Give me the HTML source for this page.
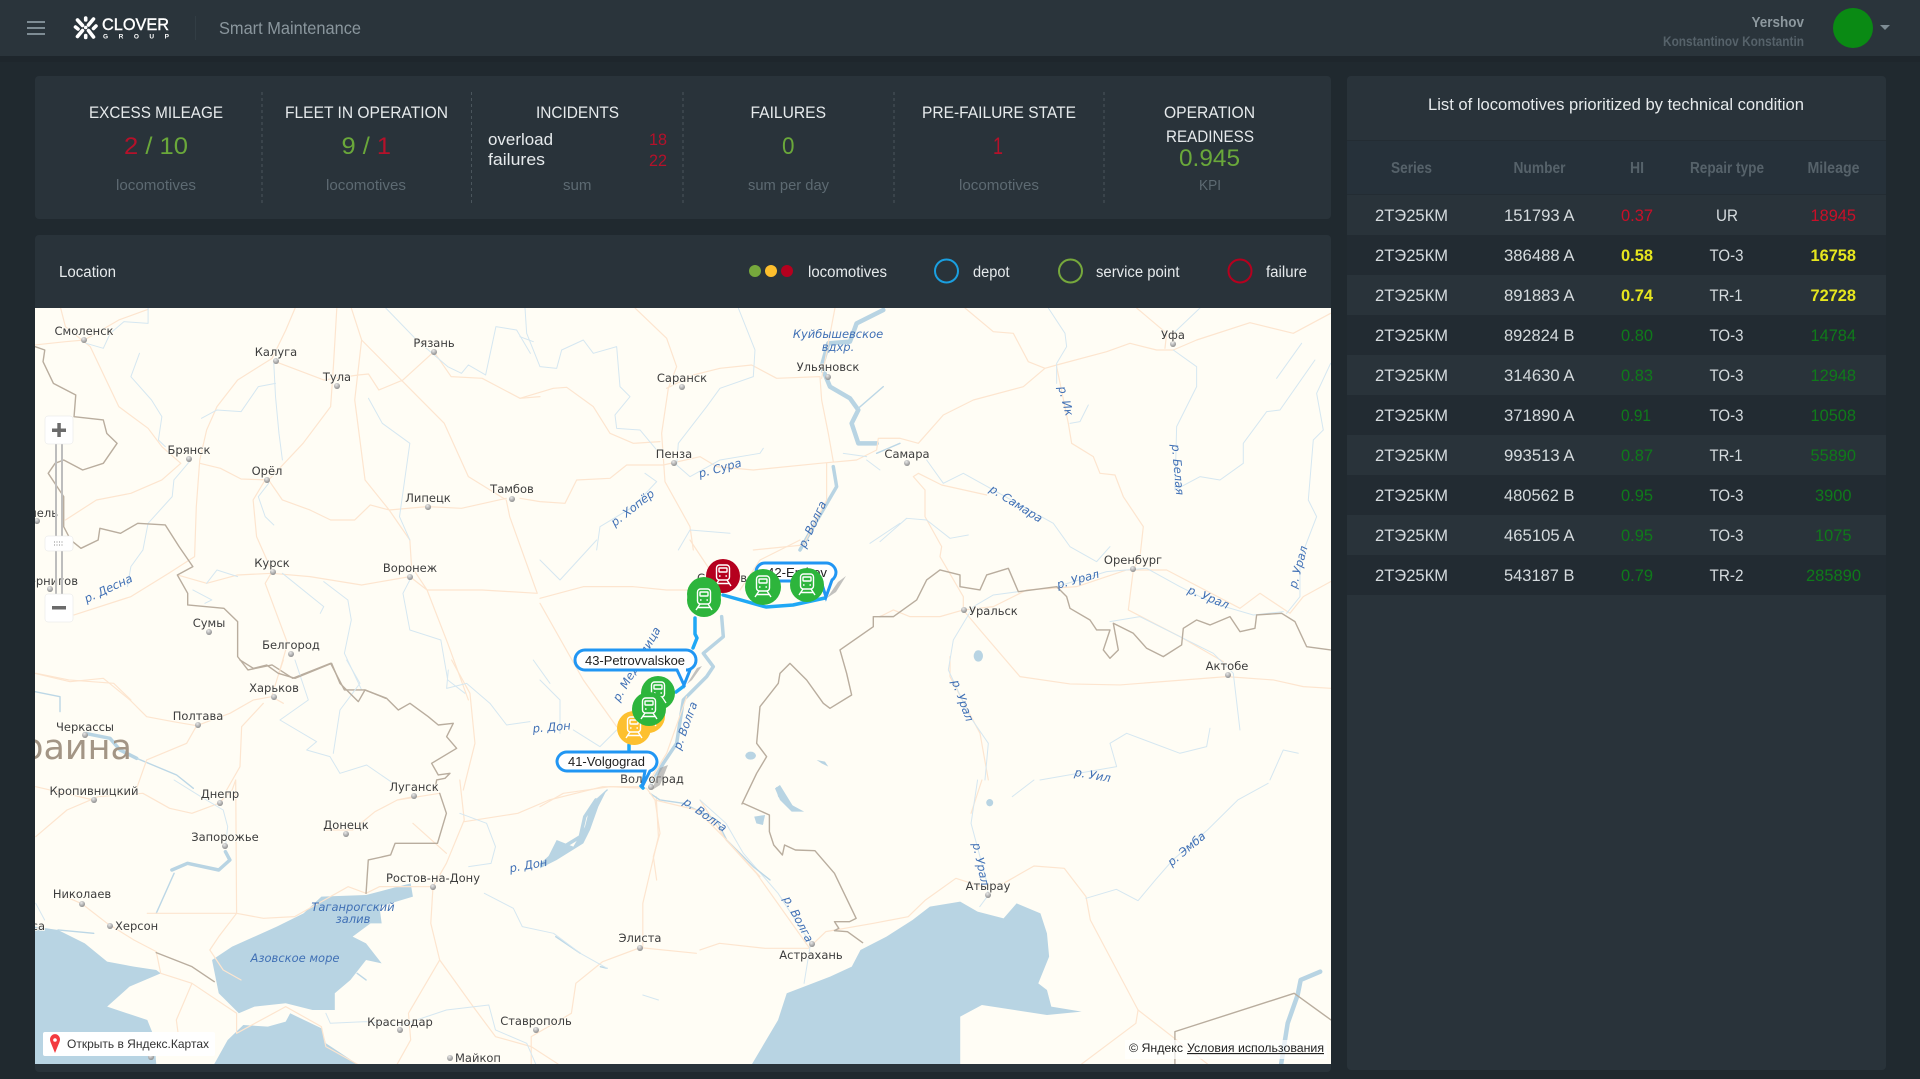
<!DOCTYPE html>
<html lang="en"><head><meta charset="utf-8"><title>Smart Maintenance</title>
<style>
html,body{margin:0;padding:0;background:#20292f;width:1920px;height:1079px;overflow:hidden}
svg{display:block;font-family:"Liberation Sans","Noto Sans CJK SC",sans-serif}
.m path{vector-effect:non-scaling-stroke;stroke-linejoin:round;stroke-linecap:round}
.w{fill:#b8d4e3;stroke:none}
.wl{fill:none;stroke:#b8d4e3;stroke-width:4.5}
.wm{fill:none;stroke:#b8d4e3;stroke-width:3.5}
.wt{fill:none;stroke:#b8d4e3;stroke-width:2}
.wf{fill:none;stroke:#bcd7e6;stroke-width:1.4}
.rv{fill:none;stroke:#d5e7f1;stroke-width:1}
.rd{fill:none;stroke:#fde5cf;stroke-width:1.2}
.bd{fill:none;stroke:#b9ad9e;stroke-width:1.4}
.c{font:11.5px "DejaVu Sans","Liberation Sans",sans-serif;fill:#3d3d3d;text-anchor:middle;paint-order:stroke;stroke:#fffdf5;stroke-width:1.5}
.cs{text-anchor:start}.ce{text-anchor:end}
.r{font:italic 11.5px "DejaVu Sans","Liberation Sans",sans-serif;fill:#4070b5;text-anchor:middle}
.h{font-size:17px;fill:#e6eaec}
.s{font-size:15px;fill:#5d6a72}
.n{font-size:24.5px}
.g{fill:#6aa83a}.e{fill:#b5112a}
.l{font-size:15.5px;fill:#e6eaec}
.th{font-size:15.5px;font-weight:bold;fill:#56626a}
.td{font-size:16.5px;fill:#d5dbde}
.re{fill:#c90f28;font-size:16.5px}.ye{fill:#e6e61e;font-size:16.5px;font-weight:bold}.gr{fill:#0f7a1a;font-size:16.5px}
.bl{fill:#fff;stroke:#2196f3;stroke-width:3}
.bt{font-size:13px;fill:#222}
.dash{stroke:#4a555c;stroke-width:1;stroke-dasharray:3 3}
</style></head><body>
<svg width="1920" height="1079" viewBox="0 0 1920 1079" xmlns="http://www.w3.org/2000/svg">
<defs>
<clipPath id="mc"><rect x="35" y="308" width="1296" height="756"/></clipPath>
<radialGradient id="dg" cx=".4" cy=".3" r=".8"><stop offset="0" stop-color="#e8e8e8"/><stop offset="1" stop-color="#808080"/></radialGradient>
<g id="tr" fill="none" stroke="#fff" stroke-width="1.4">
<rect x="-6.5" y="-11" width="13" height="15" rx="3"/>
<rect x="-4" y="-8" width="8" height="4" rx=".5"/>
<circle cx="-3.2" cy="0" r=".9" fill="#fff" stroke="none"/><circle cx="3.2" cy="0" r=".9" fill="#fff" stroke="none"/>
<path d="M-4 4 L-8 10 M4 4 L8 10 M-6.5 7.5 H6.5"/>
</g>
</defs>

<!-- header -->
<rect width="1920" height="1079" fill="#20292f"/>
<rect width="1920" height="56" fill="#2a343b"/>
<rect y="56" width="1920" height="6" fill="#1e262c"/>
<rect x="27" y="21" width="18" height="2" fill="#7e8c94"/><rect x="27" y="27" width="18" height="2" fill="#7e8c94"/><rect x="27" y="33" width="18" height="2" fill="#7e8c94"/>
<g fill="none" stroke="#fff" stroke-width="3.6" stroke-linecap="round">
<path d="M77.500 20 L82.500 25.500 M93.500 19 L88.500 25 M75.500 27 L78 29 M96 26 L93.500 28.500 M82.500 30.500 L77.500 36.500 M88.500 30.500 L93.500 37 M85.700 18 L85.700 20 M85.700 35.500 L85.700 37.500"/>
</g>
<circle cx="85.700" cy="27.500" r="1.800" fill="#fff"/>
<text x="102" y="30" font-size="16.500" fill="#fff" stroke="#fff" stroke-width=".4" textLength="67" lengthAdjust="spacingAndGlyphs">CLOVER</text>
<text x="103" y="38.500" font-size="6.500" font-weight="bold" fill="#fff" textLength="66" lengthAdjust="spacing">GROUP</text>
<rect x="195" y="16" width="1" height="24" fill="#323d44"/>
<text x="219" y="34" font-size="17.500" fill="#8a969d" textLength="142" lengthAdjust="spacingAndGlyphs">Smart Maintenance</text>
<text x="1751.500" y="27" font-size="15" font-weight="bold" fill="#8d989e" textLength="52.500" lengthAdjust="spacingAndGlyphs">Yershov</text>
<text x="1663" y="46" font-size="13.500" font-weight="bold" fill="#56626a" textLength="141" lengthAdjust="spacingAndGlyphs">Konstantinov Konstantin</text>
<circle cx="1853" cy="28" r="20" fill="#0a8a14"/>
<path d="M1880 25 H1890 L1885 30 Z" fill="#7e8c94"/>

<!-- panels -->
<rect x="35" y="76" width="1296" height="143" rx="4" fill="#29333a"/>
<rect x="35" y="235" width="1296" height="837" rx="4" fill="#29333a"/>
<rect x="1347" y="76" width="539" height="994" rx="4" fill="#29333a"/>

<!-- KPI -->
<g class="dash"><path d="M262 92V203M471.500 92V203M683 92V203M894 92V203M1104 92V203"/></g>
<text class="h" x="89" y="118" textLength="134" lengthAdjust="spacingAndGlyphs">EXCESS MILEAGE</text>
<text class="n" x="124" y="154" textLength="64" lengthAdjust="spacingAndGlyphs"><tspan class="e">2</tspan><tspan class="g"> / 10</tspan></text>
<text class="s" x="116" y="190" textLength="80" lengthAdjust="spacingAndGlyphs">locomotives</text>
<text class="h" x="285" y="118" textLength="163" lengthAdjust="spacingAndGlyphs">FLEET IN OPERATION</text>
<text class="n" x="341.500" y="154" textLength="49.500" lengthAdjust="spacingAndGlyphs"><tspan class="g">9 / </tspan><tspan class="e">1</tspan></text>
<text class="s" x="326" y="190" textLength="80" lengthAdjust="spacingAndGlyphs">locomotives</text>
<text class="h" x="536" y="118" textLength="83" lengthAdjust="spacingAndGlyphs">INCIDENTS</text>
<text class="h" x="488" y="145" textLength="65" lengthAdjust="spacingAndGlyphs">overload</text>
<text class="h" x="488" y="165" textLength="57" lengthAdjust="spacingAndGlyphs">failures</text>
<text class="e" font-size="17" x="649" y="145" textLength="18" lengthAdjust="spacingAndGlyphs">18</text>
<text class="e" font-size="17" x="649" y="166" textLength="18" lengthAdjust="spacingAndGlyphs">22</text>
<text class="s" x="563" y="190" textLength="28.500" lengthAdjust="spacingAndGlyphs">sum</text>
<text class="h" x="750.500" y="118" textLength="75.500" lengthAdjust="spacingAndGlyphs">FAILURES</text>
<text class="n g" x="782" y="154" textLength="12.500" lengthAdjust="spacingAndGlyphs">0</text>
<text class="s" x="748" y="190" textLength="81" lengthAdjust="spacingAndGlyphs">sum per day</text>
<text class="h" x="922" y="118" textLength="154" lengthAdjust="spacingAndGlyphs">PRE-FAILURE STATE</text>
<text class="n e" x="993" y="154" textLength="10" lengthAdjust="spacingAndGlyphs">1</text>
<text class="s" x="959" y="190" textLength="80" lengthAdjust="spacingAndGlyphs">locomotives</text>
<text class="h" x="1164" y="118" textLength="91" lengthAdjust="spacingAndGlyphs">OPERATION</text>
<text class="h" x="1166" y="142" textLength="88" lengthAdjust="spacingAndGlyphs">READINESS</text>
<text class="n g" x="1179" y="166" textLength="61" lengthAdjust="spacingAndGlyphs">0.945</text>
<text class="s" x="1199" y="190" textLength="22" lengthAdjust="spacingAndGlyphs">KPI</text>

<!-- legend -->
<text class="l" x="59" y="277" textLength="57" lengthAdjust="spacingAndGlyphs">Location</text>
<circle cx="755" cy="271" r="6" fill="#76a83c"/><circle cx="771" cy="271" r="6" fill="#fdbf2d"/><circle cx="787" cy="271" r="6" fill="#b5001e"/>
<text class="l" x="808" y="277" textLength="79" lengthAdjust="spacingAndGlyphs">locomotives</text>
<circle cx="946.500" cy="271" r="11.500" fill="none" stroke="#1a9fe0" stroke-width="2"/>
<text class="l" x="973" y="277" textLength="36.500" lengthAdjust="spacingAndGlyphs">depot</text>
<circle cx="1070.500" cy="271" r="11.500" fill="none" stroke="#76a83c" stroke-width="2"/>
<text class="l" x="1096" y="277" textLength="83.500" lengthAdjust="spacingAndGlyphs">service point</text>
<circle cx="1240" cy="271" r="11.500" fill="none" stroke="#b5001e" stroke-width="2"/>
<text class="l" x="1266" y="277" textLength="41" lengthAdjust="spacingAndGlyphs">failure</text>

<!-- map -->
<g clip-path="url(#mc)">
<rect x="35" y="308" width="1296" height="756" fill="#fffdf5"/>
<g class="m">
<!-- zoom A -->
<g transform="matrix(.3444 0 0 .3333 0 300)">
<path class="rd" d="M176,24 L190,80 L262,140 L345,320 L430,385 L470,440 L525,490 M100,135 L190,125 L245,120 M245,120 L345,60 L430,28 M857,24 L830,90 L790,175 L690,240 L630,320 L600,390 L580,480 L570,620 L565,770 L490,820 L380,890 L215,945 M580,490 L640,505 L700,537 L780,540 L880,430 L960,320 L968,200 L978,24 M780,540 L820,600 L900,630 L960,660 L1030,660 L1075,615 L1130,630 L1240,620 L1340,625 L1470,595 M800,185 L940,240 L1040,225 L1070,222 L1100,270 L1170,240 L1260,155 L1310,230 L1400,235 L1510,295 L1568,290 M1020,24 L1050,120 L1030,300 L1060,540 L1130,630 L1190,720 L1195,800 L1240,870 L1300,1030 L1360,1200 M1050,120 L1165,240 L1290,370 L1360,530 L1470,600 L1480,650 L1560,880 M525,490 L470,540 L380,580 L280,600 L190,660 M770,540 L735,600 L745,710 L790,815 L770,850 L835,1030 L810,1120 M515,825 L600,850 L690,825 L790,820 L900,830 L1050,855 L1190,830 L1240,870 L1400,870 L1560,880 M105,1120 L200,1140 L330,1150 L380,1200"/>
<path class="rv" d="M430,24 L430,70 L360,65 L320,100 L300,145 L250,130 M405,160 L380,230 L440,300 L470,350 L460,420 L480,440 M795,190 L800,290 L810,400 L820,480 M800,250 L750,260 L700,335 L630,330 L585,355 M550,485 L505,540 L500,590 L430,670 L415,750 L380,800 L370,860 M780,550 L750,590 L770,650 L795,675 M1070,295 L1110,370 L1190,430 L1160,650 L1190,720 M820,820 L940,920 L930,940 M940,845 L1010,900 L1020,960 L1000,1060 L1050,1170 M1190,840 L1170,880 L1190,990 L1280,1020 L1300,1140 L1350,1180 M600,850 L630,810 L690,830 M560,870 L615,900 L595,910 M1120,24 L1210,120 L1300,200 L1340,220 L1360,195 L1410,225 L1440,80 L1500,90 L1540,160"/>
<path class="bd" d="M102,140 L130,150 L125,185 L155,250 L220,285 L215,350 L300,360 L310,400 L340,430 L300,490 L240,510 L185,480 L160,490 L140,520 L185,590 L185,680 L205,720 L235,745 L285,720 L290,685 L350,700 L400,670 L480,675 L520,740 L560,800 L515,825 L545,880 L545,915 L650,925 L690,965 L690,1070 L720,1110 L790,1095 L850,1135 L960,1090 L1000,1170 L1060,1170 L1120,1195"/>
</g>
<!-- zoom B -->
<g transform="matrix(.4464 0 0 .3333 0 780)">
<path class="w" d="M680,400 L720,350 L820,345 L920,310 L925,350 L850,380 L855,430 L830,430 L790,470 L820,490 L855,550 L820,540 L785,600 L750,640 L750,690 L700,690 L640,670 L570,680 L535,700 L490,640 L475,540 L520,500 L620,440 Z"/>
<path class="w" d="M78,440 L130,450 L190,490 L240,545 L300,560 L350,570 L360,580 L290,620 L240,680 L330,720 L345,770 L350,852 L78,852 Z"/>
<path class="w" d="M480,852 L510,780 L545,735 L600,740 L640,725 L650,700 L720,745 L730,790 L800,852 Z"/>
<path class="wm" d="M1335,60 L1310,110 L1300,170 L1245,215 L1225,240 M385,270 L420,250 L490,270 L515,240 L505,215"/>
<path class="wf" d="M1360,30 L1335,60 M390,280 L370,340 L350,400 M130,450 L210,460 M1245,470 L1300,520 M1360,565 L1345,560 M800,580 L820,600"/>
<path class="rd" d="M80,170 L150,90 L220,50 L320,40 L380,85 L430,100 L490,70 L520,30 L528,0 M80,20 L210,60 M528,0 L530,400 L490,470 L470,510 L500,570 L540,600 M530,400 L590,415 L660,410 L780,320 L820,340 L850,320 L970,320 L1000,250 L1040,120 L1030,0 M300,480 L350,515 L360,580 L430,610 L395,720 L400,770 M430,610 L530,700 L530,760 L640,680 L720,740 L730,800 L800,852 M330,400 L530,400 M970,320 L965,430 L985,540 L915,700 L920,780 L890,852 M985,540 L1060,680 L1110,770 L1190,800 L1250,852 M1040,125 L1160,100 L1230,60 L1350,20 L1440,20 M1470,50 L1475,170 L1440,370 L1440,500 L1350,545 L1290,610 L1280,700 L1190,770 L1190,852 M725,150 L790,150 L840,95 L890,60 L925,50 M890,60 L985,40 M1000,220 L925,130 M1434,503 L1560,520 M130,340 L183,371 L240,430 L300,480"/>
<path class="rv" d="M80,370 L100,420 M390,0 L450,50 L500,90 L510,140 L505,200 M1030,100 L1090,130 L1110,200 L1100,250 L1050,260 M1085,340 L1150,385 L1170,440 L1240,460 L1300,520 L1360,565 M730,700 L740,730 L820,725 L900,735 L1000,690 L1095,675 L1110,750 L1180,790 L1200,852 M1440,645 L1475,660"/>
<path class="bd" d="M985,40 L1000,100 L980,190 L885,190 L875,225 L825,240 L820,340 M350,518 L430,560 L480,605"/>
</g>
<!-- zoom C -->
<g transform="matrix(.4337 0 0 .3333 700 780)">
<path class="w" d="M120,852 L180,720 L200,640 L240,620 L300,590 L350,560 L370,510 L430,470 L490,420 L530,380 L600,365 L640,395 L700,415 L730,370 L785,400 L800,460 L805,530 L780,610 L800,630 L810,680 L880,695 L800,705 L650,675 L600,710 L600,852 Z"/>
<path class="w" d="M175,20 L205,70 L240,95 L205,85 L180,50 Z M125,110 L150,105 L145,135 L130,130 Z"/>
<ellipse class="w" cx="668" cy="68" rx="8" ry="11"/>
<path class="wl" d="M1430,575 L1385,600 L1378,645 L1355,730 L1340,852"/>
<path class="rd" d="M0,510 L45,490 L150,505 L250,505 L290,455 L400,430 L480,410 L520,360 L590,295 L650,320 L700,310 L770,258 L840,265 L890,350 L900,420 L1010,690 L1005,730 L880,852 M1010,690 L1170,852 M250,500 L130,280 L60,180 L0,60 M625,100 L650,0"/>
<path class="rv" d="M0,60 L60,130 L100,220 L180,340 L255,490 L240,610 M640,0 L625,130 L660,300 L665,345 L645,380 M890,355 L960,328 L1010,362 L1050,300 L1090,240 L1170,150 L1240,60 L1310,10 M720,50 L770,0"/>
<path class="bd" d="M100,70 L160,105 L160,155 L170,195 L190,225 L195,195 L220,210 L265,212 L310,280 L360,415 L345,425 L310,425 L320,445 L310,452 L340,455 L375,488 M1095,852 L1095,755 L1370,640 L1455,720"/>
</g>
<!-- zoom D -->
<g transform="matrix(.3333 0 0 .3333 880 300)">
<ellipse class="w" cx="295" cy="1068" rx="14" ry="17"/>
<path class="rd" d="M255,24 L340,95 L400,100 L445,185 L495,205 L530,195 L680,155 L750,130 L830,150 L880,150 L950,120 L1110,68 L1240,100 L1352,40 M495,205 L430,260 L280,300 L190,345 L115,430 L60,415 L0,415 M770,24 L860,100 L855,145 M115,520 L100,530 L135,570 L135,650 L185,740 L180,770 L250,890 L250,930 L300,990 L420,1130 L570,1152 L720,1155 L1040,1130 L1180,1140 L1270,1160 L1352,1165 M115,520 L185,555 L320,585 M530,200 L565,370 L575,430 L640,470 L660,520 L705,525 L730,590 L790,680 L780,770 L760,810 L745,930 L900,1010 L1030,1085 M0,950 L40,930 L90,950 L180,950 L250,930 M250,930 L340,920 L440,870 L590,860 L740,810 L860,810 L1080,925 L1140,880 L1230,940 L1270,890 L1352,845 M210,1070 L210,1130 L300,1300 L325,1440"/>
<path class="rv" d="M505,24 L555,100 L560,140 L530,190 L530,250 M570,370 L600,365 L625,315 M960,24 L880,100 M880,150 L950,200 L950,260 L890,380 L885,570 L960,530 L1020,540 L1090,490 L1090,430 L1160,335 L1200,330 L1305,180 M1352,190 L1310,280 L1330,390 L1300,420 L1285,600 L1310,650 L1260,780 L1260,890 L1220,940 M1265,130 L1190,235 M0,725 L80,655 L140,660 L210,715 L265,705 M140,480 L190,550 L250,520 L340,570 L520,670 L570,740 L650,785 L690,740 M530,860 L680,815 L800,805 L900,860 L1000,910 L1120,945 L1210,935 M415,875 L340,885 L280,920 L220,1020 L205,1110 L270,1250 L325,1330 L315,1440 M690,965 L780,950 L1000,1060 L1060,1120 L1080,1290 M990,1285 L980,1340 L900,1360 L740,1300 L690,1330 L710,1400 L480,1440 M1170,1440 L1210,1350 L1255,1360"/>
<path class="bd" d="M0,950 L40,950 L110,900 L140,840 L180,810 L240,825 L240,860 L300,870 L320,825 L385,805 L415,875 L530,860 L560,890 L570,925 L630,960 L650,990 L690,990 L670,1050 L690,1075 L715,1050 L700,970 L760,1000 L800,1045 L850,1070 L905,1035 L910,985 L950,960 L990,975 L1050,950 L1080,995 L1125,985 L1130,945 L1205,940 L1245,965 L1280,1040 L1352,1050"/>
</g>
<!-- zoom F -->
<g transform="matrix(.3333 0 0 .3333 520 300)">
<path class="wl" d="M1090,30 L1010,70 L990,125 L925,130 L905,200 L930,260 L990,295 L1015,330 L995,370 L1015,430 L1070,430"/>
<path class="wm" d="M940,500 L950,560 L880,680 L840,750"/>
<path class="wf" d="M1015,325 L1090,260 M1070,460 L1140,430"/>
<path class="rd" d="M345,24 L440,115 L470,200 L445,265 L425,400 L435,545 L510,680 L520,750 M0,295 L100,265 L140,262 L220,320 L270,400 L340,430 L420,425 M440,265 L520,225 L600,205 L695,195 L770,235 L900,230 L905,300 L925,400 L940,485 M945,24 L905,235 M0,595 L60,605 L135,610 L170,540 L270,535 L320,495 L430,495 L540,470 L590,500 L700,510 L900,490 L1010,480 L1070,450 L1075,415 L1140,415 M920,490 L920,600 L850,735 L700,750"/>
<path class="rv" d="M15,24 L20,100 L60,200 L110,205 L125,150 L190,120 L220,160 L290,140 L300,260 L330,290 L285,345 L290,385 L360,390 L410,450 M655,24 L705,150 L700,230 L600,265 L560,320 L475,430 L470,495 L510,530 L600,480 L720,460 L730,445 M375,520 L410,545 L340,620 L240,680 L230,750 M475,750 L510,690 L630,700 M0,110 L40,125 M970,460 L1040,470 M1040,480 L1080,510 M1140,670 L1050,730"/>
</g>
<!-- zoom E -->
<g transform="matrix(.3333 0 0 .3333 540 540)">
<path class="wm" d="M545,230 L550,290 L490,340 L520,380 L500,410 L430,480 L410,610 L370,670 L335,730"/>
<path class="rd" d="M0,175 L130,140 L280,140 L380,150 L500,150 M450,0 L510,90 M0,190 L130,420 L230,560 M780,0 L660,60 L600,150 M440,470 L380,640 L330,720"/>
<path class="rv" d="M0,60 L60,120 L170,0 M0,420 L60,480 L60,580 M100,570 L180,620 L230,570"/>
<path class="bd" d="M1020,230 L1000,230 L1000,260 L900,330 L920,400 L935,465 L870,505 L850,490 L800,420 L750,370 L720,400 L715,430 L660,500 L650,610 L680,650 L650,700 L606,792"/>
</g>
<!-- zoom H -->
<g transform="matrix(.3333 0 0 .3333 540 700)">
<ellipse class="w" cx="632" cy="167" rx="16" ry="12"/>
<path class="w" d="M705,265 L720,255 L760,320 L792,335 L755,335 L720,300 Z M652,350 L665,350 L670,372 L655,365 Z M830,180 L855,185 L865,200 L845,190 Z"/>
<path class="w" d="M200,270 L150,320 L135,380 L100,440 L50,420 L25,470 L0,490 L0,505 L50,480 L130,430 L150,390 L175,320 Z"/>
<path class="wf" d="M330,280 L360,300 L430,310 L530,360 L560,420 L640,500 L690,540"/>
<path class="rd" d="M0,320 L70,280 L210,260 L320,265 L345,300 L360,400 L340,470 L350,540 M345,300 L470,330 L560,420 L660,530"/>
</g>
<!-- zoom G -->
<g transform="matrix(.3333 0 0 .3333 30 660)">
<path class="wm" d="M165,220 L240,235 L270,270 L320,295"/>
<path class="wf" d="M15,95 L90,110 L90,155 M320,295 L440,345 L490,385"/>
<path class="rd" d="M15,40 L120,65 L220,55 L300,120 L350,170 L430,185 L500,197 L600,160 L670,120 L725,110 M760,0 L745,45 L725,110 L760,130 M500,197 L470,250 L350,300 L320,385 M700,130 L635,200 L630,320 L590,390 M1265,0 L1320,100 L1335,250 L1300,390"/>
<path class="rv" d="M795,0 L835,120 L750,180 L860,245 L830,270 L900,290 L930,340 L1010,315 L1090,370 M950,0 L990,70 L930,150 L910,280 M1255,30 L1250,85 L1310,70 L1380,130 L1430,195 L1500,185 M1510,0 L1560,70"/>
<path class="bd" d="M630,0 L670,25 L710,15 L745,40 L795,55 L905,10 L930,70 L985,125 L1005,90 L1070,115 L1105,150 L1140,130 L1195,170 L1225,195 L1270,190 L1250,230 L1280,265 L1205,310 L1225,345 L1260,340 L1245,355 L1220,360 L1215,390"/>
</g>
</g>

<!-- country -->
<text x="132" y="759" font-family="DejaVu Sans" font-size="35" fill="#a39585" text-anchor="end">Украина</text>

<!-- city dots -->
<g fill="url(#dg)">
<circle cx="84" cy="340" r="3"/><circle cx="276" cy="361" r="3"/><circle cx="434" cy="352" r="3"/><circle cx="337" cy="386" r="3"/><circle cx="189" cy="459" r="3"/><circle cx="267" cy="480" r="3"/><circle cx="512" cy="499" r="3"/><circle cx="428" cy="507" r="3"/><circle cx="37" cy="521" r="3"/><circle cx="50" cy="589" r="3"/><circle cx="273" cy="572" r="3"/><circle cx="410" cy="577" r="3"/><circle cx="209" cy="632" r="3"/><circle cx="291" cy="654" r="3"/><circle cx="274" cy="697" r="3"/><circle cx="198" cy="725" r="3"/><circle cx="85" cy="735" r="3"/><circle cx="94" cy="800" r="3"/><circle cx="220" cy="803" r="3"/><circle cx="414" cy="796" r="3"/><circle cx="346" cy="834" r="3"/><circle cx="225" cy="846" r="3"/><circle cx="433" cy="887" r="3"/><circle cx="82" cy="904" r="3"/><circle cx="110" cy="926" r="3"/><circle cx="640" cy="948" r="3"/><circle cx="400" cy="1030" r="3"/><circle cx="536" cy="1030" r="3"/><circle cx="450" cy="1058" r="3"/><circle cx="151" cy="1057" r="3"/><circle cx="988" cy="895" r="3"/><circle cx="812" cy="944" r="3"/><circle cx="1173" cy="344" r="3"/><circle cx="907" cy="463" r="3"/><circle cx="1133" cy="569" r="3"/><circle cx="964" cy="610" r="3"/><circle cx="1228" cy="675" r="3"/><circle cx="682" cy="387" r="3"/><circle cx="828" cy="377" r="3"/><circle cx="674" cy="463" r="3"/><circle cx="651" cy="787" r="3"/>
</g>

<!-- city labels -->
<text class="c" x="84" y="335">Смоленск</text><text class="c" x="276" y="356">Калуга</text><text class="c" x="434" y="347">Рязань</text><text class="c" x="337" y="381">Тула</text><text class="c" x="189" y="454">Брянск</text><text class="c" x="267" y="475">Орёл</text><text class="c" x="512" y="493">Тамбов</text><text class="c" x="428" y="502">Липецк</text><text class="c ce" x="58" y="517">Гомель</text><text class="c ce" x="78" y="585">Чернигов</text><text class="c" x="272" y="567">Курск</text><text class="c" x="410" y="572">Воронеж</text><text class="c" x="209" y="627">Сумы</text><text class="c" x="291" y="649">Белгород</text><text class="c" x="274" y="692">Харьков</text><text class="c" x="198" y="720">Полтава</text><text class="c" x="85" y="731">Черкассы</text><text class="c" x="94" y="795">Кропивницкий</text><text class="c" x="220" y="798">Днепр</text><text class="c" x="414" y="791">Луганск</text><text class="c" x="346" y="829">Донецк</text><text class="c" x="225" y="841">Запорожье</text><text class="c" x="433" y="882">Ростов-на-Дону</text><text class="c" x="82" y="898">Николаев</text><text class="c cs" x="115" y="930">Херсон</text><text class="c ce" x="45" y="930">Одесса</text><text class="c" x="640" y="942">Элиста</text><text class="c" x="400" y="1026">Краснодар</text><text class="c" x="536" y="1025">Ставрополь</text><text class="c cs" x="455" y="1062">Майкоп</text><text class="c" x="988" y="890">Атырау</text><text class="c" x="811" y="959">Астрахань</text><text class="c" x="1173" y="339">Уфа</text><text class="c" x="907" y="458">Самара</text><text class="c" x="1133" y="564">Оренбург</text><text class="c cs" x="969" y="615">Уральск</text><text class="c" x="1227" y="670">Актобе</text><text class="c" x="682" y="382">Саранск</text><text class="c" x="828" y="371">Ульяновск</text><text class="c" x="674" y="458">Пенза</text><text class="c" x="652" y="783">Волгоград</text><text class="c" x="722" y="582">Саратов</text>

<!-- river labels -->
<text class="r" transform="rotate(-25 110 592)" x="110" y="592">р. Десна</text>
<text class="r" x="838" y="338">Куйбышевское</text><text class="r" x="838" y="351">вдхр.</text>
<text class="r" transform="rotate(-15 721 472)" x="721" y="472">р. Сура</text>
<text class="r" transform="rotate(-38 635 511)" x="635" y="511">р. Хопёр</text>
<text class="r" transform="rotate(-65 816 526)" x="816" y="526">р. Волга</text>
<text class="r" transform="rotate(75 1062 402)" x="1062" y="402">р. Ик</text>
<text class="r" transform="rotate(85 1174 470)" x="1174" y="470">р. Белая</text>
<text class="r" transform="rotate(32 1014 507)" x="1014" y="507">р. Самара</text>
<text class="r" transform="rotate(-15 1079 583)" x="1079" y="583">р. Урал</text>
<text class="r" transform="rotate(22 1207 601)" x="1207" y="601">р. Урал</text>
<text class="r" transform="rotate(-75 1302 568)" x="1302" y="568">р. Урал</text>
<text class="r" transform="rotate(70 959 702)" x="959" y="702">р. Урал</text>
<text class="r" transform="rotate(10 1092 779)" x="1092" y="779">р. Уил</text>
<text class="r" transform="rotate(-60 640 666)" x="640" y="666">р. Медведица</text>
<text class="r" transform="rotate(-5 552 731)" x="552" y="731">р. Дон</text>
<text class="r" transform="rotate(-70 689 727)" x="689" y="727">р. Волга</text>
<text class="r" transform="rotate(35 703 818)" x="703" y="818">р. Волга</text>
<text class="r" transform="rotate(-10 529 869)" x="529" y="869">р. Дон</text>
<text class="r" x="353" y="911">Таганрогский</text><text class="r" x="353" y="923">залив</text>
<text class="r" x="295" y="962">Азовское море</text>
<text class="r" transform="rotate(62 795 921)" x="795" y="921">р. Волга</text>
<text class="r" transform="rotate(78 977 865)" x="977" y="865">р. Урал</text>
<text class="r" transform="rotate(-40 1189 852)" x="1189" y="852">р. Эмба</text>

<!-- route -->
<g fill="none" stroke="#1fa8f5" stroke-width="3.500" stroke-linejoin="round" stroke-linecap="round">
<path d="M695 618 L695 634 L697 638 L693 648 M676 692 L684 686 M629 745 L629 752 M643 788 L641 786 M723 595 L766 607 L793 605 L825 598"/>
</g>
<!-- tail shadows -->
<path d="M687 684 L697 668 L702 666 L692 680 Z" fill="#999" opacity=".6"/>
<path d="M652 790 L660 768 L668 765 L660 785 Z" fill="#999" opacity=".6"/>
<path d="M827 598 L838 582 L846 576 L836 592 Z" fill="#999" opacity=".6"/>

<!-- balloons -->
<path class="bl" d="M585 650 H686 A10 10 0 0 1 696 660 A10 10 0 0 1 686 670 H690 L684 685 L677 670 H585 A10 10 0 0 1 575 660 A10 10 0 0 1 585 650 Z"/>
<text class="bt" x="585" y="665" textLength="100" lengthAdjust="spacingAndGlyphs">43-Petrovvalskoe</text>
<path class="bl" d="M567 752 H647 A10 10 0 0 1 657 762 A10 10 0 0 1 650 771 L642 787 L645 771 H567 A10 10 0 0 1 557 761 A10 10 0 0 1 567 752 Z"/>
<text class="bt" x="568" y="766" textLength="77" lengthAdjust="spacingAndGlyphs">41-Volgograd</text>
<path class="bl" d="M765 563 H826 A10 10 0 0 1 836 572 A10 10 0 0 1 832 580 L826 597 L821 581 H765 A9 9 0 0 1 756 572 A9 9 0 0 1 765 563 Z"/>
<text class="bt" x="767" y="577" textLength="60" lengthAdjust="spacingAndGlyphs">42-Ershov</text>

<!-- markers -->
<circle cx="723" cy="576" r="17" fill="#b5001e"/><use href="#tr" x="723" y="576"/>
<circle cx="704" cy="594" r="17" fill="#2db53c"/>
<circle cx="704" cy="600" r="17" fill="#2db53c"/><use href="#tr" x="704" y="600"/>
<circle cx="763" cy="587" r="18" fill="#2db53c"/><use href="#tr" x="763" y="587"/>
<circle cx="807" cy="585" r="17" fill="#2db53c"/><use href="#tr" x="807" y="585"/>
<circle cx="648" cy="716" r="17" fill="#fdc02f"/><use href="#tr" x="648" y="716"/>
<circle cx="634" cy="728" r="17" fill="#fdc02f"/><use href="#tr" x="634" y="728"/>
<circle cx="658" cy="693" r="17" fill="#2db53c"/><use href="#tr" x="658" y="693"/>
<circle cx="649" cy="709" r="17" fill="#2db53c"/><use href="#tr" x="649" y="709"/>

<!-- zoom control -->
<g>
<rect x="55" y="444" width="2" height="150" fill="#bdbdbd"/><rect x="61" y="444" width="2" height="150" fill="#bdbdbd"/>
<rect x="45" y="416" width="28" height="28" rx="3" fill="#fff" stroke="#e5e5e5" stroke-width=".5"/>
<rect x="52" y="428.500" width="14" height="3.500" fill="#6b6b6b"/><rect x="57.300" y="423" width="3.500" height="14" fill="#6b6b6b"/>
<rect x="45" y="536" width="28" height="15" rx="3" fill="#fff" stroke="#e5e5e5" stroke-width=".5"/>
<path d="M54 542H64M54 545H64" stroke="#888" stroke-width="1" stroke-dasharray="1 1.500"/>
<rect x="45" y="594" width="28" height="28" rx="3" fill="#fff" stroke="#e5e5e5" stroke-width=".5"/>
<rect x="52" y="606" width="14" height="3.500" fill="#6b6b6b"/>
</g>

<!-- open in yandex -->
<rect x="43" y="1032" width="172" height="24" rx="2" fill="#fff"/>
<path d="M55 1053 L50.500 1042 A5 5.500 0 1 1 59.500 1042 Z" fill="#f33a3f"/><circle cx="55" cy="1040" r="1.800" fill="#fff"/>
<text x="67" y="1048" font-size="12" fill="#333" textLength="142" lengthAdjust="spacingAndGlyphs">Открыть в Яндекс.Картах</text>

<!-- copyright -->
<rect x="1125" y="1040" width="202" height="19" fill="#fff" opacity=".7"/>
<text x="1129" y="1052" font-size="11.500" fill="#222" textLength="54" lengthAdjust="spacingAndGlyphs">© Яндекс</text>
<text x="1187" y="1052" font-size="11.500" fill="#222" text-decoration="underline" textLength="137" lengthAdjust="spacingAndGlyphs">Условия использования</text>
</g>

<!-- table -->
<text x="1428" y="110" font-size="17" fill="#e6eaec" textLength="376" lengthAdjust="spacingAndGlyphs">List of locomotives prioritized by technical condition</text>
<rect x="1347" y="140" width="539" height="55" fill="#26313a"/>
<rect x="1347" y="140" width="539" height="1" fill="#232c33"/><rect x="1347" y="194" width="539" height="1" fill="#232c33"/>
<text class="th" x="1391" y="173" textLength="41" lengthAdjust="spacingAndGlyphs">Series</text>
<text class="th" x="1513.500" y="173" textLength="52" lengthAdjust="spacingAndGlyphs">Number</text>
<text class="th" x="1630" y="173" textLength="14" lengthAdjust="spacingAndGlyphs">HI</text>
<text class="th" x="1690" y="173" textLength="74" lengthAdjust="spacingAndGlyphs">Repair type</text>
<text class="th" x="1807.500" y="173" textLength="52" lengthAdjust="spacingAndGlyphs">Mileage</text>
<rect x="1347" y="235" width="539" height="40" fill="#222b32"/><rect x="1347" y="315" width="539" height="40" fill="#222b32"/><rect x="1347" y="395" width="539" height="40" fill="#222b32"/><rect x="1347" y="475" width="539" height="40" fill="#222b32"/><rect x="1347" y="555" width="539" height="40" fill="#222b32"/>

<g id="rows">
<text class="td" x="1375" y="221" textLength="73" lengthAdjust="spacingAndGlyphs">2ТЭ25КМ</text><text class="td" x="1504" y="221" textLength="70.500" lengthAdjust="spacingAndGlyphs">151793 A</text><text class="re" x="1621" y="221" textLength="32" lengthAdjust="spacingAndGlyphs">0.37</text><text class="td" x="1716" y="221" textLength="22" lengthAdjust="spacingAndGlyphs">UR</text><text class="re" x="1810.500" y="221" textLength="45.500" lengthAdjust="spacingAndGlyphs">18945</text>
<text class="td" x="1375" y="261" textLength="73" lengthAdjust="spacingAndGlyphs">2ТЭ25КМ</text><text class="td" x="1504" y="261" textLength="70.500" lengthAdjust="spacingAndGlyphs">386488 A</text><text class="ye" x="1621" y="261" textLength="32" lengthAdjust="spacingAndGlyphs">0.58</text><text class="td" x="1709.500" y="261" textLength="34" lengthAdjust="spacingAndGlyphs">TO-3</text><text class="ye" x="1810.500" y="261" textLength="45.500" lengthAdjust="spacingAndGlyphs">16758</text>
<text class="td" x="1375" y="301" textLength="73" lengthAdjust="spacingAndGlyphs">2ТЭ25КМ</text><text class="td" x="1504" y="301" textLength="70.500" lengthAdjust="spacingAndGlyphs">891883 A</text><text class="ye" x="1621" y="301" textLength="32" lengthAdjust="spacingAndGlyphs">0.74</text><text class="td" x="1709.500" y="301" textLength="33" lengthAdjust="spacingAndGlyphs">TR-1</text><text class="ye" x="1810.500" y="301" textLength="45.500" lengthAdjust="spacingAndGlyphs">72728</text>
<text class="td" x="1375" y="341" textLength="73" lengthAdjust="spacingAndGlyphs">2ТЭ25КМ</text><text class="td" x="1504" y="341" textLength="70.500" lengthAdjust="spacingAndGlyphs">892824 B</text><text class="gr" x="1621" y="341" textLength="32" lengthAdjust="spacingAndGlyphs">0.80</text><text class="td" x="1709.500" y="341" textLength="34" lengthAdjust="spacingAndGlyphs">TO-3</text><text class="gr" x="1810.500" y="341" textLength="45.500" lengthAdjust="spacingAndGlyphs">14784</text>
<text class="td" x="1375" y="381" textLength="73" lengthAdjust="spacingAndGlyphs">2ТЭ25КМ</text><text class="td" x="1504" y="381" textLength="70.500" lengthAdjust="spacingAndGlyphs">314630 A</text><text class="gr" x="1621" y="381" textLength="32" lengthAdjust="spacingAndGlyphs">0.83</text><text class="td" x="1709.500" y="381" textLength="34" lengthAdjust="spacingAndGlyphs">TO-3</text><text class="gr" x="1810.500" y="381" textLength="45.500" lengthAdjust="spacingAndGlyphs">12948</text>
<text class="td" x="1375" y="421" textLength="73" lengthAdjust="spacingAndGlyphs">2ТЭ25КМ</text><text class="td" x="1504" y="421" textLength="70.500" lengthAdjust="spacingAndGlyphs">371890 A</text><text class="gr" x="1621" y="421" textLength="30" lengthAdjust="spacingAndGlyphs">0.91</text><text class="td" x="1709.500" y="421" textLength="34" lengthAdjust="spacingAndGlyphs">TO-3</text><text class="gr" x="1810.500" y="421" textLength="45.500" lengthAdjust="spacingAndGlyphs">10508</text>
<text class="td" x="1375" y="461" textLength="73" lengthAdjust="spacingAndGlyphs">2ТЭ25КМ</text><text class="td" x="1504" y="461" textLength="70.500" lengthAdjust="spacingAndGlyphs">993513 A</text><text class="gr" x="1621" y="461" textLength="32" lengthAdjust="spacingAndGlyphs">0.87</text><text class="td" x="1709.500" y="461" textLength="33" lengthAdjust="spacingAndGlyphs">TR-1</text><text class="gr" x="1810.500" y="461" textLength="45.500" lengthAdjust="spacingAndGlyphs">55890</text>
<text class="td" x="1375" y="501" textLength="73" lengthAdjust="spacingAndGlyphs">2ТЭ25КМ</text><text class="td" x="1504" y="501" textLength="70.500" lengthAdjust="spacingAndGlyphs">480562 B</text><text class="gr" x="1621" y="501" textLength="32" lengthAdjust="spacingAndGlyphs">0.95</text><text class="td" x="1709.500" y="501" textLength="34" lengthAdjust="spacingAndGlyphs">TO-3</text><text class="gr" x="1815" y="501" textLength="36.500" lengthAdjust="spacingAndGlyphs">3900</text>
<text class="td" x="1375" y="541" textLength="73" lengthAdjust="spacingAndGlyphs">2ТЭ25КМ</text><text class="td" x="1504" y="541" textLength="70.500" lengthAdjust="spacingAndGlyphs">465105 A</text><text class="gr" x="1621" y="541" textLength="32" lengthAdjust="spacingAndGlyphs">0.95</text><text class="td" x="1709.500" y="541" textLength="34" lengthAdjust="spacingAndGlyphs">TO-3</text><text class="gr" x="1815" y="541" textLength="36.500" lengthAdjust="spacingAndGlyphs">1075</text>
<text class="td" x="1375" y="581" textLength="73" lengthAdjust="spacingAndGlyphs">2ТЭ25КМ</text><text class="td" x="1504" y="581" textLength="70.500" lengthAdjust="spacingAndGlyphs">543187 B</text><text class="gr" x="1621" y="581" textLength="32" lengthAdjust="spacingAndGlyphs">0.79</text><text class="td" x="1709.500" y="581" textLength="34" lengthAdjust="spacingAndGlyphs">TR-2</text><text class="gr" x="1806" y="581" textLength="55" lengthAdjust="spacingAndGlyphs">285890</text>
</g>
</svg>
</body></html>
